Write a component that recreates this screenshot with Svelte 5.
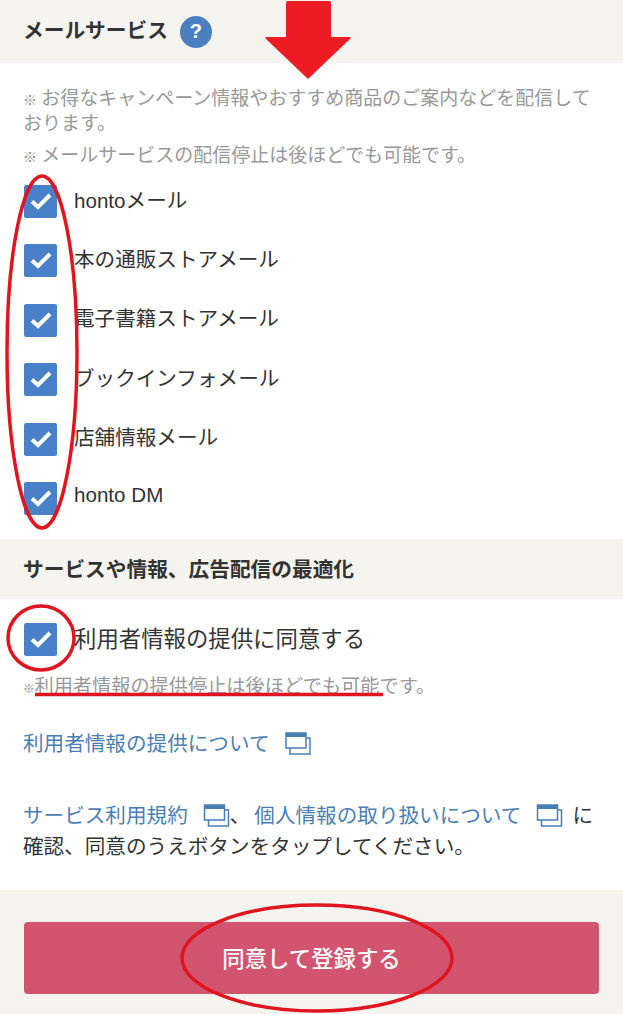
<script>
	const mails = ['hontoメール', '本の通販ストアメール', '電子書籍ストアメール', 'ブックインフォメール', '店舗情報メール', 'honto DM'];
</script>

{#snippet check()}
	<span class="box">
		<svg viewBox="0 0 33 33" width="33" height="33"><path d="M8 16.500l6 5.500L26 10" fill="none" stroke="#fff" stroke-width="4" /></svg>
	</span>
{/snippet}

{#snippet win()}
	<svg class="win" viewBox="0 0 26 24" width="26" height="24">
		<path d="M1 1h20v15H1z" fill="#fff" stroke="#4a7fb5" stroke-width="1.500" />
		<path d="M1 1h20v4H1z" fill="#4a7fb5" />
		<path d="M5 16v6h20V6h-4" fill="none" stroke="#4a7fb5" stroke-width="1.500" />
	</svg>
{/snippet}

<div class="page">
	<h2 class="head first">
		メールサービス
		<span class="help">?</span>
	</h2>

	<div class="mail">
		<p class="note"><small>※</small> お得なキャンペーン情報やおすすめ商品のご案内などを配信しております。</p>
		<p class="note second"><small>※</small> メールサービスの配信停止は後ほどでも可能です。</p>

		<ul>
			{#each mails as m}
				<li>{@render check()}<span class="label">{m}</span></li>
			{/each}
		</ul>
	</div>

	<h2 class="head">サービスや情報、広告配信の最適化</h2>

	<div class="consent">
		<div class="agree">{@render check()}<span class="agree-label">利用者情報の提供に同意する</span></div>
		<p class="note stop"><small>※</small>利用者情報の提供停止は後ほどでも可能です。</p>
		<a class="about" href="#about">利用者情報の提供について{@render win()}</a>
		<p class="terms">
			<a href="#terms">サービス利用規約{@render win()}</a>、<a class="privacy" href="#privacy">個人情報の取り扱いについて{@render win()}</a>に確認、同意のうえボタンをタップしてください。
		</p>
	</div>

	<div class="foot">
		<button>同意して登録する</button>
	</div>

	<!-- red marks drawn over the page -->
	<svg class="marks" viewBox="0 0 623 1014" width="623" height="1014">
		<path d="M286 3q0-2 2-2h41q2 0 2 2v34h18q3 0 1 2l-42 40-42-40q-2-2 1-2h19z" fill="#ed1c24" />
		<g fill="none" stroke="#e0151f" stroke-width="3.500">
			<ellipse cx="42" cy="352" rx="35" ry="176" />
			<ellipse cx="41" cy="638" rx="33" ry="32" />
			<ellipse cx="317" cy="958" rx="135" ry="53" />
			<path d="M35 694.500h348" />
		</g>
	</svg>
</div>

<style>
	:global(body) {
		margin: 0;
		background: #fff;
	}

	.page {
		position: relative;
		width: 623px;
		height: 1014px;
		overflow: hidden;
		font-family: 'Noto Sans CJK JP', 'Liberation Sans', sans-serif;
		color: #333;
		font-size: 20.600px;
	}

	.head {
		margin: 0;
		height: 60px;
		padding: 0 23px 3px;
		box-sizing: border-box;
		display: flex;
		align-items: center;
		gap: 12px;
		background: #f6f4ee;
		font-size: 20.700px;
		font-weight: 700;
		color: #333;
	}

	.first {
		height: 63px;
		padding-bottom: 5px;
	}

	.help {
		width: 32px;
		height: 32px;
		border-radius: 50%;
		background: #4a80c0;
		color: #fff;
		display: flex;
		align-items: center;
		justify-content: center;
		font: 700 20px 'Liberation Sans', sans-serif;
		margin-top: 5px;
	}

	.mail {
		height: 476px;
		padding: 21px 23px 0;
		box-sizing: border-box;
	}

	.note {
		margin: 0;
		font-size: 19px;
		line-height: 25px;
		color: #999;
	}

	.note small {
		font-size: 14px;
		font-weight: 700;
		line-height: 0;
		color: #888;
	}

	.second {
		margin-top: 7px;
	}

	ul {
		list-style: none;
		margin: 19px 0 0 1px;
		padding: 0;
		display: flex;
		flex-direction: column;
		gap: 26.400px;
	}

	li,
	.agree {
		display: flex;
		align-items: center;
		gap: 17px;
		height: 33px;
	}

	.label {
		font-family: 'Liberation Sans', 'Noto Sans CJK JP', sans-serif;
		padding-bottom: 6px;
	}

	.box {
		width: 33px;
		height: 33px;
		flex: none;
		background: #4a80c8;
		border-radius: 2px;
		display: block;
	}

	.box svg {
		display: block;
	}

	.consent {
		height: 291px;
		padding: 24px 23px 0;
		box-sizing: border-box;
	}

	.agree {
		margin-left: 1px;
	}

	.agree-label {
		font-size: 22.400px;
		padding-bottom: 6px;
	}

	.stop {
		margin-top: 17px;
		font-size: 19.200px;
	}

	.stop small {
		font-size: 11.500px;
	}

	a {
		color: #4a7fb5;
		text-decoration: none;
	}

	.about {
		display: block;
		margin-top: 29px;
	}

	.win {
		vertical-align: -5px;
		margin-left: 15px;
	}

	.terms {
		margin: 42px 0 0;
		line-height: 31px;
	}

	.terms .win {
		width: 27px;
	}

	.privacy {
		margin-left: 4px;
	}

	.privacy .win {
		margin-right: 9px;
	}

	.foot {
		height: 124px;
		padding: 32px 24px 0;
		box-sizing: border-box;
		background: #f6f4ee;
	}

	button {
		display: block;
		width: 100%;
		height: 72px;
		padding: 0 0 3px;
		border: 0;
		border-radius: 4px;
		background: #d2546f;
		color: #fff;
		font: 500 22.400px 'Noto Sans CJK JP', sans-serif;
	}

	.marks {
		position: absolute;
		left: 0;
		top: 0;
		pointer-events: none;
	}
</style>
